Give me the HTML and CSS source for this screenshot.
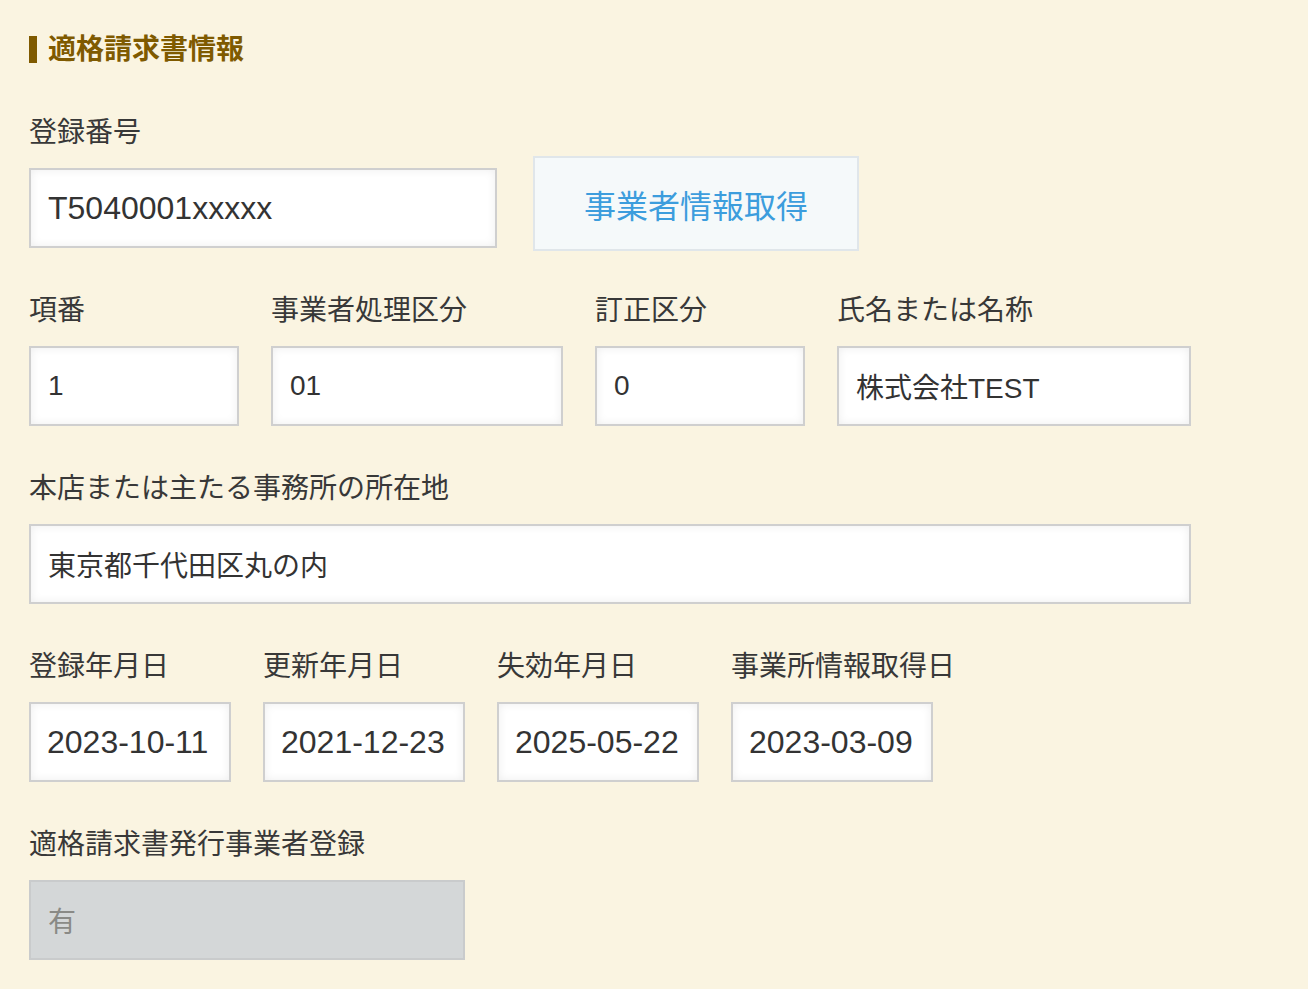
FILE: index.html
```html
<!DOCTYPE html>
<html>
<head>
    <meta charset="utf-8">
    <title>適格請求書情報</title>
    <link rel="stylesheet" href="styles.css">
</head>
<body>
    <div class="invoice-section">
        <h2 class="section-title">適格請求書情報</h2>

        <div class="field">
            <label class="field-label" for="regNo">登録番号</label>
            <div class="reg-row">
                <input type="text" id="regNo" class="field-input reg-input w-reg" value="T5040001xxxxx">
                <button type="button" class="btn-fetch">事業者情報取得</button>
            </div>
        </div>

        <div class="field-row">
            <div class="field w-item">
                <label class="field-label">項番</label>
                <input type="text" class="field-input" value="1">
            </div>
            <div class="field w-proc">
                <label class="field-label">事業者処理区分</label>
                <input type="text" class="field-input" value="01">
            </div>
            <div class="field w-item">
                <label class="field-label">訂正区分</label>
                <input type="text" class="field-input" value="0">
            </div>
            <div class="field w-name">
                <label class="field-label">氏名または名称</label>
                <input type="text" class="field-input" value="株式会社TEST">
            </div>
        </div>

        <div class="field w-full">
            <label class="field-label">本店または主たる事務所の所在地</label>
            <input type="text" class="field-input" value="東京都千代田区丸の内">
        </div>

        <div class="field-row">
            <div class="field w-date">
                <label class="field-label">登録年月日</label>
                <input type="text" class="field-input date-input" value="2023-10-11">
            </div>
            <div class="field w-date">
                <label class="field-label">更新年月日</label>
                <input type="text" class="field-input date-input" value="2021-12-23">
            </div>
            <div class="field w-date">
                <label class="field-label">失効年月日</label>
                <input type="text" class="field-input date-input" value="2025-05-22">
            </div>
            <div class="field w-date">
                <label class="field-label">事業所情報取得日</label>
                <input type="text" class="field-input date-input" value="2023-03-09">
            </div>
        </div>

        <div class="field w-flag">
            <label class="field-label">適格請求書発行事業者登録</label>
            <input type="text" class="field-input" value="有" disabled>
        </div>
    </div>
</body>
</html>
```

FILE: styles.css
```css
body {
    margin: 0;
    background: #faf4e1;
    font-family: "Liberation Sans", "Noto Sans CJK JP", sans-serif;
    color: #333;
}

.invoice-section {
    padding: 28px 29px 0;
}

.section-title {
    margin: 0 0 41px;
    height: 40px;
    padding-top: 2px;
    display: flex;
    align-items: center;
    font-size: 28px;
    font-weight: bold;
    color: #7f5a00;
    line-height: 40px;
}

.section-title::before {
    content: "";
    width: 8px;
    height: 27px;
    background: #7f5a00;
    margin: 0 11px 2px 0;
}

.field {
    display: flex;
    flex-direction: column;
    margin-bottom: 41px;
}

.field-label {
    font-size: 28px;
    line-height: 40px;
    height: 40px;
    padding-top: 2px;
    margin-bottom: 15px;
    color: #383838;
    white-space: nowrap;
}

.field-row {
    display: flex;
    gap: 32px;
}

.reg-row {
    display: flex;
    align-items: flex-start;
}

.field-input {
    box-sizing: border-box;
    width: 100%;
    height: 80px;
    border: 2px solid #cfcfcf;
    background: #fff;
    box-shadow: inset 0 0 10px rgba(0, 0, 0, 0.07);
    padding: 0 17px;
    font-family: "Liberation Sans", "Noto Sans CJK JP", sans-serif;
    font-size: 28px;
    color: #333;
    outline: none;
}

.field-input:disabled {
    background: #d4d7d8;
    border-color: #c9cbcc;
    box-shadow: none;
    color: #8a8a86;
}

.reg-input {
    font-size: 32px;
}

.date-input {
    font-size: 32px;
    padding: 0 16px;
}

.w-reg { width: 468px; }
.w-item { width: 210px; }
.w-proc { width: 292px; }
.w-name { width: 354px; }
.w-full { width: 1162px; }
.w-date { width: 202px; }
.w-flag { width: 436px; }

.btn-fetch {
    box-sizing: border-box;
    width: 326px;
    height: 95px;
    margin: -12px 0 -3px 36px;
    border: 2px solid #e0e6ea;
    background: #f5f9fa;
    color: #3c9ddd;
    font-family: "Liberation Sans", "Noto Sans CJK JP", sans-serif;
    font-size: 32px;
    cursor: pointer;
}
```
